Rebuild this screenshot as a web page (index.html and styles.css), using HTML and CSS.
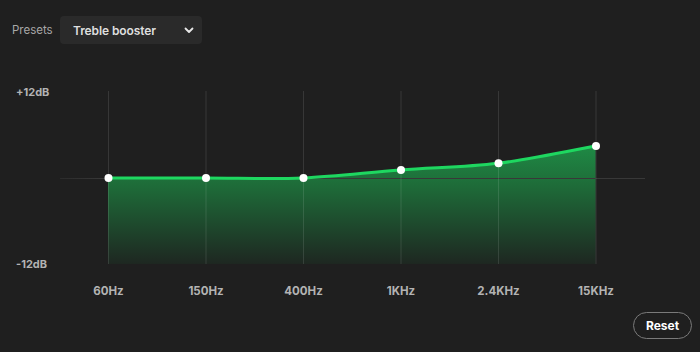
FILE: index.html
```html
<!DOCTYPE html>
<html>
<head>
<meta charset="utf-8">
<link rel="stylesheet" href="styles.css">
</head>
<body>
<div class="page">
  <div class="header">
    <span class="presets-label">Presets</span>
    <div class="select">
      <span class="select-text">Treble booster</span>
      <svg class="chevron" width="10" height="7" viewBox="0 0 10 7"><path d="M1.5 1.5 L5 5 L8.5 1.5" fill="none" stroke="#e8e8e8" stroke-width="1.8" stroke-linecap="round" stroke-linejoin="round"/></svg>
    </div>
  </div>
  <div class="chart">
    <div class="yaxis">
      <span>+12dB</span>
      <span>-12dB</span>
    </div>
    <svg class="plot" width="594" height="184" viewBox="0 0 594 184">
      <defs>
        <linearGradient id="fillg" x1="0" y1="60" x2="0" y2="178" gradientUnits="userSpaceOnUse">
          <stop offset="0" stop-color="#1f8a45"/>
          <stop offset="0.35" stop-color="#1e6a38"/>
          <stop offset="1" stop-color="#1e2721"/>
        </linearGradient>
        <linearGradient id="zline" x1="0" y1="0" x2="594" y2="0" gradientUnits="userSpaceOnUse">
          <stop offset="0" stop-color="#2a2a2a"/>
          <stop offset="0.08" stop-color="#383838"/>
          <stop offset="1" stop-color="#383838"/>
        </linearGradient>
      </defs>
      <path d="M52 92 C68.25 92 117 92 149.5 92 C182 92 214.5 93.3 247 92 C279.5 90.7 312 86.4 344.5 84 C377 81.5 409.5 81.3 442 77.3 C474.5 73.3 523.25 62.9 539.5 60 L539.5 178 L52 178 Z" fill="url(#fillg)"/>
      <line x1="4" y1="92.5" x2="589" y2="92.5" stroke="url(#zline)" stroke-width="1"/>
      <g stroke="rgba(255,255,255,0.11)" stroke-width="1">
        <line x1="52.5" y1="5" x2="52.5" y2="178"/>
        <line x1="150" y1="5" x2="150" y2="178"/>
        <line x1="247.5" y1="5" x2="247.5" y2="178"/>
        <line x1="345" y1="5" x2="345" y2="178"/>
        <line x1="442.5" y1="5" x2="442.5" y2="178"/>
        <line x1="540" y1="5" x2="540" y2="178"/>
      </g>
      <path d="M52 92 C68.25 92 117 92 149.5 92 C182 92 214.5 93.3 247 92 C279.5 90.7 312 86.4 344.5 84 C377 81.5 409.5 81.3 442 77.3 C474.5 73.3 523.25 62.9 539.5 60" fill="none" stroke="#1ed760" stroke-width="3" stroke-linecap="round"/>
      <g fill="#ffffff">
        <circle cx="52.5" cy="92" r="4"/>
        <circle cx="150" cy="92" r="4"/>
        <circle cx="247.5" cy="92" r="4"/>
        <circle cx="345" cy="84" r="4"/>
        <circle cx="442.5" cy="77.3" r="4"/>
        <circle cx="540" cy="60" r="4"/>
      </g>
    </svg>
  </div>
  <div class="freqs">
    <span>60Hz</span>
    <span>150Hz</span>
    <span>400Hz</span>
    <span>1KHz</span>
    <span>2.4KHz</span>
    <span>15KHz</span>
  </div>
  <div class="footer">
    <button class="reset">Reset</button>
  </div>
</div>
</body>
</html>
```
FILE: styles.css
```css
* { box-sizing: border-box; }
html, body {
  margin: 0;
  padding: 0;
  background: #1f1f1f;
  width: 700px;
  height: 352px;
  overflow: hidden;
  font-family: "Inter", "Lato", "Liberation Sans", sans-serif;
}
.page {
  display: flex;
  flex-direction: column;
}
.header {
  display: grid;
  grid-template-columns: 48px 142px;
  align-items: center;
  padding: 16px 0 0 12px;
  height: 44px;
}
.presets-label {
  font-size: 11.5px;
  color: #a7a7a7;
  white-space: nowrap;
}
.select {
  width: 142px;
  height: 28px;
  background: #2a2a2a;
  border-radius: 4px;
  display: flex;
  align-items: center;
  justify-content: space-between;
  padding: 0 8px 0 13px;
}
.select-text {
  font-size: 12px;
  font-weight: 600;
  color: #dedede;
  letter-spacing: -0.1px;
}
.chevron { display: block; }
.chart {
  display: flex;
  margin-top: 42px;
  height: 184px;
}
.yaxis {
  width: 56px;
  padding-left: 16px;
  display: flex;
  flex-direction: column;
  justify-content: space-between;
  font-size: 11px;
  font-weight: 700;
  color: #b3b3b3;
  line-height: 12px;
}
.plot { display: block; }
.freqs {
  display: grid;
  grid-template-columns: repeat(6, 97.5px);
  margin-left: 59.75px;
  margin-top: 13px;
  line-height: 16px;
  font-size: 11.5px;
  font-weight: 700;
  color: #b3b3b3;
  text-align: center;
}
.footer {
  display: flex;
  justify-content: flex-end;
  padding-right: 8px;
  margin-top: 13px;
}
.reset {
  height: 27px;
  width: 59px;
  padding: 0;
  border: 1px solid #7a7a7a;
  border-radius: 14px;
  background: transparent;
  color: #ffffff;
  font-family: inherit;
  font-size: 12px;
  font-weight: 700;
}
```
